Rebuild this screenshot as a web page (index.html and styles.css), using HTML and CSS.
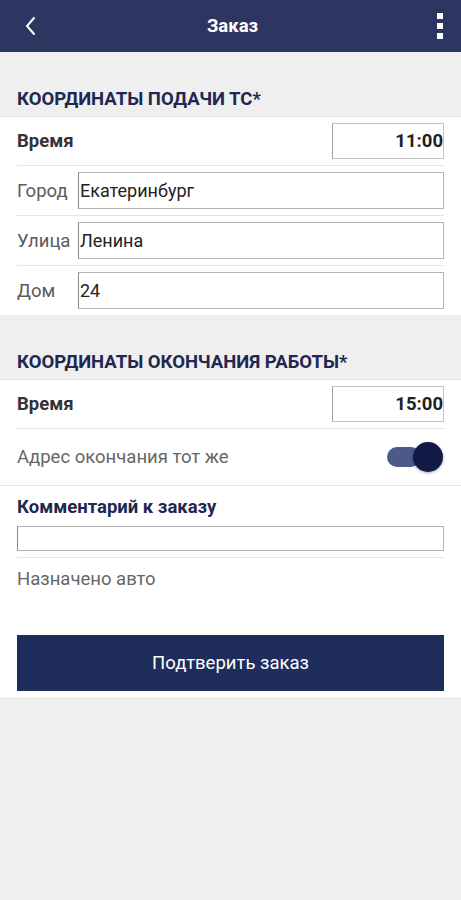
FILE: index.html
```html
<!DOCTYPE html>
<html lang="ru">
<head>
    <meta charset="UTF-8">
    <meta name="viewport" content="width=device-width, initial-scale=1.0">
    <title>Заказ</title>
    <link rel="stylesheet" href="styles.css">
</head>
<body>

    <header class="topbar">
        <button class="icon-btn back-btn" aria-label="Назад">
            <svg width="12" height="20" viewBox="0 0 12 20"><path d="M10 2 L3 10 L10 18" fill="none" stroke="#fff" stroke-width="2" stroke-linecap="round"/></svg>
        </button>
        <h1 class="topbar-title">Заказ</h1>
        <button class="icon-btn menu-btn" aria-label="Меню">
            <span class="dot"></span><span class="dot"></span><span class="dot"></span>
        </button>
    </header>

    <div class="section-head">
        <h2>КООРДИНАТЫ ПОДАЧИ ТС*</h2>
    </div>
    <div class="card">
        <div class="row row-time">
            <span class="label-bold">Время</span>
            <input class="time-box" type="text" value="11:00">
        </div>
        <div class="row">
            <span class="label">Город</span>
            <input class="field" type="text" value="Екатеринбург">
        </div>
        <div class="row">
            <span class="label">Улица</span>
            <input class="field" type="text" value="Ленина">
        </div>
        <div class="row last">
            <span class="label">Дом</span>
            <input class="field" type="text" value="24">
        </div>
    </div>

    <div class="section-head">
        <h2>КООРДИНАТЫ ОКОНЧАНИЯ РАБОТЫ*</h2>
    </div>
    <div class="card">
        <div class="row row-time">
            <span class="label-bold">Время</span>
            <input class="time-box" type="text" value="15:00">
        </div>
        <div class="row row-toggle last">
            <span class="label">Адрес окончания тот же</span>
            <span class="toggle"><span class="toggle-thumb"></span></span>
        </div>
        <div class="comment">
            <div class="comment-title">Комментарий к заказу</div>
            <input class="comment-field" type="text">
        </div>
        <div class="assigned">Назначено авто</div>
        <button class="confirm-btn">Подтверить заказ</button>
    </div>

</body>
</html>
```

FILE: styles.css
```css
body {
    margin: 0;
    background-color: #efefef;
    font-family: Roboto, "Noto Sans", Arial, sans-serif;
    color: #333;
}

/* top bar */
.topbar {
    height: 52px;
    background-color: #2d3561;
    display: flex;
    align-items: center;
    justify-content: space-between;
    padding: 0 14px 0 18px;
}
.topbar-title {
    margin: 0;
    color: white;
    font-size: 18.5px;
    font-weight: bold;
}
.icon-btn {
    background: none;
    border: none;
    padding: 0;
    width: 24px;
    height: 32px;
    display: flex;
    align-items: center;
    justify-content: center;
}
.back-btn {
    justify-content: flex-start;
    padding-left: 6px;
}
.menu-btn {
    flex-direction: column;
    gap: 4px;
    align-items: flex-end;
    padding-right: 4px;
}
.dot {
    width: 6px;
    height: 6px;
    background-color: white;
}

/* section headings */
.section-head {
    height: 65px;
    display: flex;
    align-items: flex-end;
    padding: 0 17px 6px;
    box-sizing: border-box;
    border-bottom: 1px solid #e3e3e3;
}
.section-head h2 {
    margin: 0;
    font-size: 18.5px;
    line-height: 22px;
    font-weight: bold;
    color: #1e2850;
    white-space: nowrap;
}

/* white card with rows */
.card {
    background-color: white;
}
.row {
    display: flex;
    align-items: center;
    margin: 0 17px;
    padding: 6px 0;
    border-bottom: 1px solid #e6e6e6;
    gap: 6px;
}
.row.last {
    border-bottom: none;
}
.row-time {
    justify-content: space-between;
}
.label-bold {
    font-size: 18.5px;
    font-weight: bold;
    color: #333;
}
.label {
    font-size: 18.5px;
    color: #5b5b5b;
    width: 55px;
    flex-shrink: 0;
    white-space: nowrap;
}
.time-box {
    width: 112px;
    height: 36px;
    box-sizing: border-box;
    border: 1px solid #c4c4c4;
    border-left-color: #9f9f9f;
    padding: 0;
    text-align: right;
    font-family: inherit;
    font-size: 18.5px;
    font-weight: bold;
    color: #222;
}
.field {
    flex: 1;
    min-width: 0;
    height: 37px;
    box-sizing: border-box;
    border: 1px solid #b5b5b5;
    border-left-color: #8a8a8a;
    padding: 0 1px;
    font-family: inherit;
    font-size: 18px;
    color: #222;
}

/* toggle row */
.row-toggle {
    justify-content: space-between;
    height: 56px;
    padding: 0;
}
.row-toggle .label {
    width: auto;
    color: #666;
}
.toggle {
    position: relative;
    width: 34px;
    height: 20px;
    border-radius: 10px;
    background-color: #4b5a88;
    margin-right: 23px;
}
.toggle-thumb {
    position: absolute;
    right: -22px;
    top: -5px;
    width: 30px;
    height: 30px;
    border-radius: 50%;
    background-color: #101c45;
    box-shadow: 0 1px 3px rgba(0, 0, 0, 0.35);
}

/* comment */
.comment {
    border-top: 1px solid #e3e3e3;
    padding: 10px 17px 0;
}
.comment-title {
    font-size: 18.5px;
    font-weight: bold;
    color: #1e2850;
    line-height: 22px;
}
.comment-field {
    display: block;
    width: 100%;
    height: 25px;
    margin-top: 8px;
    box-sizing: border-box;
    border: 1px solid #b5b5b5;
    border-left-color: #8a8a8a;
    font-family: inherit;
    font-size: 16px;
}
.assigned {
    margin: 6px 17px 0;
    padding-top: 10px;
    border-top: 1px solid #e6e6e6;
    font-size: 18.5px;
    color: #666;
    line-height: 22px;
}

.confirm-btn {
    display: block;
    width: calc(100% - 34px);
    height: 56px;
    margin: 45px 17px 0;
    border: none;
    background-color: #1f2d5c;
    color: white;
    font-family: inherit;
    font-size: 18.5px;
    cursor: pointer;
}
.card:last-child {
    padding-bottom: 7px;
    border-bottom: 1px solid #e3e3e3;
}
```
